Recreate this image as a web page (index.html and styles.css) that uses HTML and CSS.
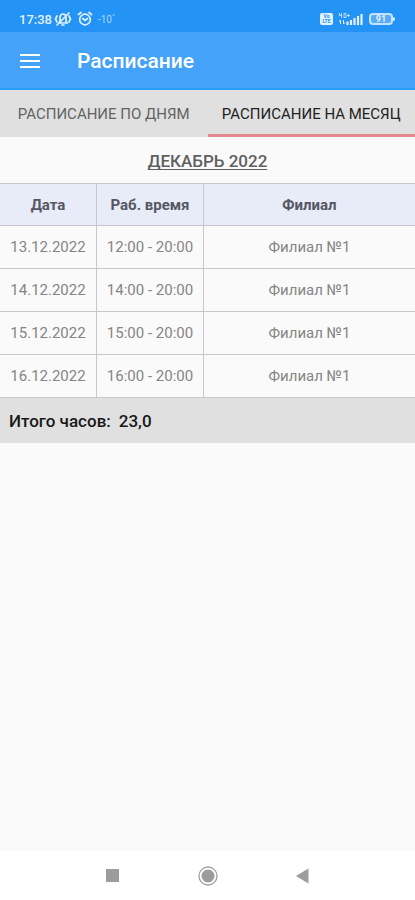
FILE: index.html
```html
<!DOCTYPE html>
<html lang="ru">
<head>
<meta charset="utf-8">
<meta name="viewport" content="width=device-width, initial-scale=1">
<title>Расписание</title>
<link rel="stylesheet" href="styles.css">
</head>
<body>
<div class="status">
  <span class="clock">17:38</span>
  <svg class="mute" width="18" height="16" viewBox="0 0 18 16" fill="none" stroke="currentColor" stroke-width="1.7" stroke-linecap="round">
    <path d="M5 12h8l-1-2V6.500C12 4.500 10.800 3 9 3S6 4.500 6 6.500V10zM8 14h2M3 14L15 2M3 5L1.500 8 3 11M15 5l1.500 3L15 11"/>
  </svg>
  <svg class="alarm" width="16" height="16" viewBox="0 0 16 16" fill="none" stroke="currentColor" stroke-width="1.700" stroke-linecap="round">
    <circle cx="8" cy="8.500" r="5.300"/><path d="M1.500 3.500L4 1.500M14.500 3.500L12 1.500M5.800 7.500L8 9.500l2.500-2"/>
  </svg>
  <span class="temp">-10<sup>°</sup></span>
  <span class="grow"></span>
  <span class="volte"><span>Vo</span><span>LTE</span></span>
  <svg class="signal" width="26" height="14" viewBox="0 0 26 14" fill="none" stroke="currentColor">
    <path d="M1.500 1v2.500H4M3.500 1v5M6 1.500h2v4H6zM9 3.500h3M10.500 2v3" stroke-width="1" opacity=".75"/>
    <path d="M2.500 8v4M1 9.500L2.500 8M5.500 8v4M7 10.500L5.500 12" stroke-width="1"/>
    <path d="M9.500 9.500V13M13 8v5M16.500 6v7M20 4v9M23.500 2v11" stroke-width="2.200"/>
  </svg>
  <span class="battery">91</span>
</div>
<header class="appbar">
  <button class="menu" type="button" aria-label="Меню">
    <svg width="20" height="14" viewBox="0 0 20 14" fill="currentColor"><path d="M0 0h20v2H0zM0 6h20v2H0zM0 12h20v2H0z"/></svg>
  </button>
  <h1>Расписание</h1>
</header>
<nav class="tabs">
  <button class="tab" type="button">РАСПИСАНИЕ ПО ДНЯМ</button>
  <button class="tab active" type="button">РАСПИСАНИЕ НА МЕСЯЦ</button>
</nav>
<main>
  <h2><span>ДЕКАБРЬ 2022</span></h2>
  <table>
    <colgroup><col class="date"><col class="time"><col></colgroup>
    <thead><tr><th>Дата</th><th>Раб. время</th><th>Филиал</th></tr></thead>
    <tbody>
      <tr><td>13.12.2022</td><td>12:00 - 20:00</td><td>Филиал №1</td></tr>
      <tr><td>14.12.2022</td><td>14:00 - 20:00</td><td>Филиал №1</td></tr>
      <tr><td>15.12.2022</td><td>15:00 - 20:00</td><td>Филиал №1</td></tr>
      <tr><td>16.12.2022</td><td>16:00 - 20:00</td><td>Филиал №1</td></tr>
    </tbody>
  </table>
  <p class="total"><span>Итого часов:</span><span>23,0</span></p>
</main>
<footer class="sysnav">
  <button type="button" aria-label="Недавние"><svg width="20" height="20" viewBox="0 0 20 20"><path d="M3 3h13v13H3z" fill="#9c9c9c"/></svg></button>
  <button type="button" aria-label="Домой"><svg width="20" height="20" viewBox="0 0 20 20"><circle cx="10" cy="10" r="9" fill="none" stroke="#a0a0a0" stroke-width="1.300"/><circle cx="10" cy="10" r="6.500" fill="#9c9c9c"/></svg></button>
  <button type="button" aria-label="Назад"><svg width="20" height="20" viewBox="0 0 20 20"><path d="M3 10l12.500-7.500v15z" fill="#9c9c9c"/></svg></button>
</footer>
</body>
</html>
```
FILE: styles.css
```css
* { box-sizing: border-box; }
body {
  margin: 0;
  min-height: 100vh;
  display: flex;
  flex-direction: column;
  background: #fafafa;
  font-family: Roboto, "Liberation Sans", sans-serif;
  font-size: 15px;
}
button {
  border: 0;
  padding: 0;
  background: none;
  font: inherit;
  color: inherit;
}
svg { display: block; }
.status {
  display: flex;
  align-items: center;
  height: 32px;
  padding: 6px 20px 0 19px;
  background: #2394f5;
  color: #e2f1ff;
}
.clock { font-size: 13px; font-weight: 500; margin-right: 2px; }
.alarm { margin-left: 5px; }
.temp { margin-left: 5px; font-size: 10px; color: #a9d5fb; }
.temp sup { font-size: 8px; line-height: 0; }
.grow { flex: 1; }
.volte {
  display: flex;
  flex-direction: column;
  align-items: center;
  justify-content: center;
  width: 13px;
  height: 12px;
  margin-right: 5px;
  border-radius: 2px;
  background: #e2f1ff;
  color: #2394f5;
  font-size: 5px;
  line-height: 5px;
  font-weight: 700;
}
.signal { margin-right: 5px; }
.battery {
  position: relative;
  width: 24px;
  height: 12px;
  margin-right: 2px;
  border: 2px solid #c5e3fe;
  border-radius: 4px;
  background: #58acf6;
  font-size: 9px;
  line-height: 8px;
  font-weight: 700;
  text-align: center;
}
.battery::after {
  content: "";
  position: absolute;
  right: -4px;
  top: 2px;
  width: 2px;
  height: 4px;
  border-radius: 0 2px 2px 0;
  background: #e2f1ff;
}
.appbar {
  display: flex;
  align-items: center;
  height: 58px;
  padding: 2px 20px 0;
  gap: 37px;
  border-bottom: 2px solid #2b9cf3;
  background: #44a3f8;
  color: #fff;
}
h1 { margin: 0; font-size: 21px; font-weight: 500; }
.tabs { display: flex; background: #e0e0e0; }
.tab {
  flex: 1;
  height: 47px;
  border-bottom: 3px solid transparent;
  padding-top: 4px;
  white-space: nowrap;
  color: #636363;
}
.tab.active { border-color: #e58a8c; color: #222; }
main { flex: 1; }
h2 {
  margin: 0;
  padding: 14px 0 12px;
  font-size: 17px;
  line-height: 20px;
  font-weight: 500;
  text-align: center;
  color: #606060;
}
h2 span { display: block; width: fit-content; height: 20px; line-height: 20px; margin: 0 auto; text-decoration: underline 1px; text-underline-offset: 2px; text-decoration-skip-ink: none; }
table { width: 100%; table-layout: fixed; border-collapse: separate; border-spacing: 0; }
.date { width: 97px; }
.time { width: 107px; }
th, td {
  height: 43px;
  padding: 0;
  border-right: 1px solid #c8c8ca;
  border-bottom: 1px solid #c8c8ca;
  text-align: center;
  white-space: nowrap;
}
th:last-child, td:last-child { border-right: 0; }
th {
  border-top: 1px solid #c8c9d0;
  background: #e8ebf8;
  color: #555762;
  font-weight: 700;
}
td { color: #858585; }
.total {
  display: flex;
  gap: 8px;
  margin: 0;
  padding: 13px 9px 12px;
  background: #e0e0e0;
  color: #181818;
  font-size: 17px;
  line-height: 20px;
  font-weight: 500;
}
.sysnav {
  display: flex;
  align-items: center;
  justify-content: center;
  gap: 75px;
  height: 49px;
  background: #fff;
}
```
